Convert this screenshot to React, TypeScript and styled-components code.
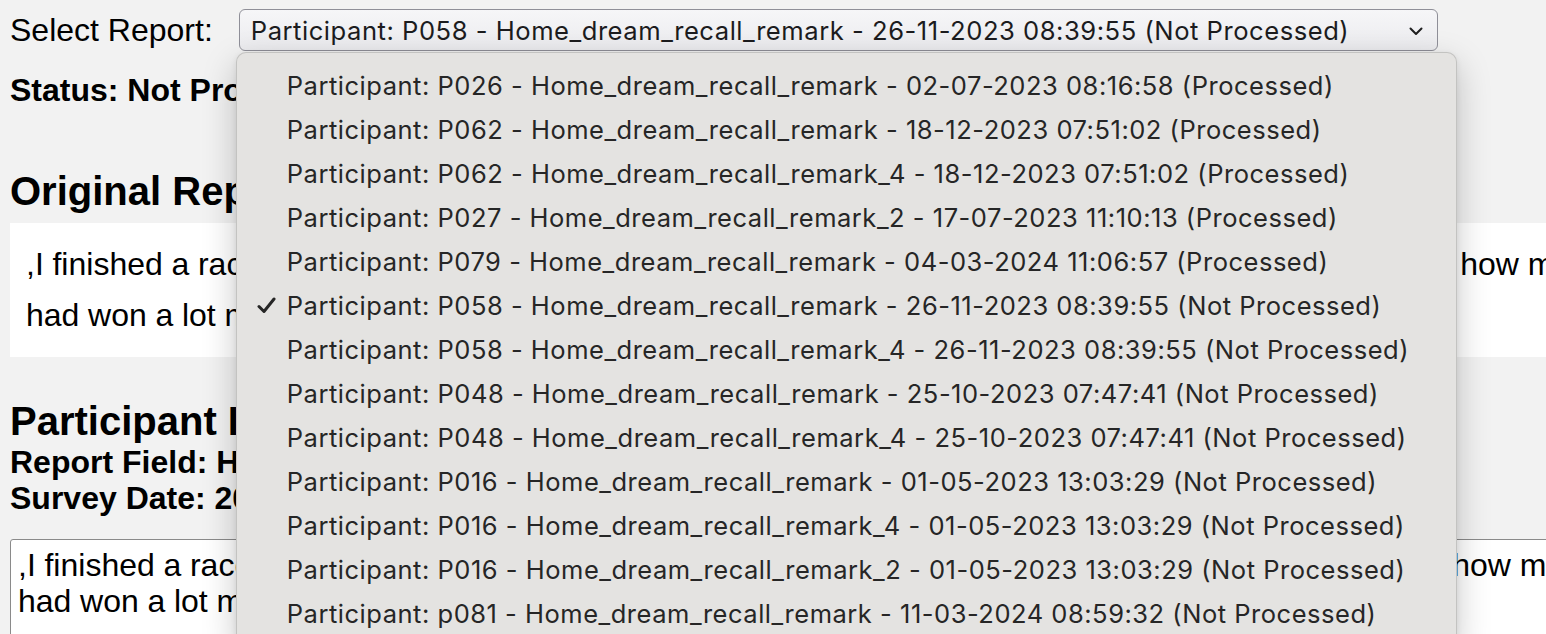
import React from "react";
import styled, { createGlobalStyle } from "styled-components";

type Report = {
  participant: string;
  field: string;
  date: string;
  processed: boolean;
};

const reports: Report[] = [
  { participant: "P026", field: "Home_dream_recall_remark", date: "02-07-2023 08:16:58", processed: true },
  { participant: "P062", field: "Home_dream_recall_remark", date: "18-12-2023 07:51:02", processed: true },
  { participant: "P062", field: "Home_dream_recall_remark_4", date: "18-12-2023 07:51:02", processed: true },
  { participant: "P027", field: "Home_dream_recall_remark_2", date: "17-07-2023 11:10:13", processed: true },
  { participant: "P079", field: "Home_dream_recall_remark", date: "04-03-2024 11:06:57", processed: true },
  { participant: "P058", field: "Home_dream_recall_remark", date: "26-11-2023 08:39:55", processed: false },
  { participant: "P058", field: "Home_dream_recall_remark_4", date: "26-11-2023 08:39:55", processed: false },
  { participant: "P048", field: "Home_dream_recall_remark", date: "25-10-2023 07:47:41", processed: false },
  { participant: "P048", field: "Home_dream_recall_remark_4", date: "25-10-2023 07:47:41", processed: false },
  { participant: "P016", field: "Home_dream_recall_remark", date: "01-05-2023 13:03:29", processed: false },
  { participant: "P016", field: "Home_dream_recall_remark_4", date: "01-05-2023 13:03:29", processed: false },
  { participant: "P016", field: "Home_dream_recall_remark_2", date: "01-05-2023 13:03:29", processed: false },
  { participant: "p081", field: "Home_dream_recall_remark", date: "11-03-2024 08:59:32", processed: false },
];

const selectedIndex = 5;

const reportText =
  ",I finished a race and I wanted to know the results, so I went to check the big board on the wall to see how many points I had won a lot more than the others, and I was very happy about it.";

const label = (r: Report) =>
  `Participant: ${r.participant} - ${r.field} - ${r.date} (${r.processed ? "Processed" : "Not Processed"})`;

const GlobalStyle = createGlobalStyle`
  html, body {
    margin: 0;
    padding: 0;
    background: #f2f2f2;
    overflow: hidden;
  }
  body {
    font-family: "Liberation Sans", Arial, sans-serif;
    font-size: 32px;
    color: #000;
  }
`;

const App: React.FC = () => {
  const current = reports[selectedIndex];
  return (
    <>
      <GlobalStyle />
      <Page>
        <PickerRow>
          <PickerLabel>Select Report:</PickerLabel>
          <SelectWrap>
            <SelectButton>
              <span>{label(current)}</span>
              <svg width="14" height="9" viewBox="0 0 14 9">
                <path d="M1.5 1.5 L7 7 L12.5 1.5" fill="none" stroke="#1f1f1f" strokeWidth="2" strokeLinecap="round" strokeLinejoin="round" />
              </svg>
            </SelectButton>
            <Menu>
              {reports.map((r, i) => (
                <MenuItem key={i}>
                  <CheckSlot>
                    {i === selectedIndex && (
                      <svg width="19" height="17" viewBox="0 0 19 17">
                        <path d="M2 9.5 L7 14.5 L17 2" fill="none" stroke="#262626" strokeWidth="3" strokeLinecap="round" strokeLinejoin="round" />
                      </svg>
                    )}
                  </CheckSlot>
                  {label(r)}
                </MenuItem>
              ))}
            </Menu>
          </SelectWrap>
        </PickerRow>

        <Status>Status: {current.processed ? "Processed" : "Not Processed"}</Status>

        <SectionTitle $top={59}>Original Report</SectionTitle>
        <ReportBox>{reportText}</ReportBox>

        <SectionTitle $top={41}>Participant Input</SectionTitle>
        <MetaLine>Report Field: {current.field}</MetaLine>
        <MetaLine>Survey Date: 2023-11-26 08:39:55</MetaLine>
        <Editor defaultValue={reportText} rows={3} />
      </Page>
    </>
  );
};

const Page = styled.div`
  width: 1776px;
  padding: 0 10px;
  box-sizing: border-box;
`;

const PickerRow = styled.div`
  display: flex;
  align-items: center;
  gap: 26px;
  padding-top: 9px;
  height: 51px;
  box-sizing: border-box;
`;

const PickerLabel = styled.label`
  font-size: 32px;
  line-height: 37px;
`;

const SelectWrap = styled.div`
  position: relative;
`;

const SelectButton = styled.div`
  display: flex;
  align-items: center;
  justify-content: space-between;
  width: 1199px;
  height: 42px;
  box-sizing: border-box;
  padding: 0 14px 0 11px;
  border: 1.5px solid #8f8f98;
  border-radius: 6px;
  background: linear-gradient(#f6f6f8, #ebebee);
  font-family: Inter, "Liberation Sans", sans-serif;
  font-size: 25.6px;
  letter-spacing: 0.52px;
  color: #1c1c1e;
  white-space: nowrap;
  svg {
    margin-top: 2px;
    flex-shrink: 0;
  }
`;

const Menu = styled.div`
  position: absolute;
  top: 43px;
  left: -3px;
  width: 1221px;
  box-sizing: border-box;
  padding: 10px 0;
  background: #e4e3e1;
  border: 1px solid rgba(0, 0, 0, 0.14);
  border-radius: 10px;
  box-shadow: 0 12px 34px rgba(0, 0, 0, 0.22), 0 2px 6px rgba(0, 0, 0, 0.08);
  z-index: 10;
`;

const MenuItem = styled.div`
  display: flex;
  align-items: center;
  height: 44px;
  font-family: Inter, "Liberation Sans", sans-serif;
  font-size: 25.5px;
  letter-spacing: 0.52px;
  color: #262626;
  white-space: nowrap;
`;

const CheckSlot = styled.span`
  display: flex;
  align-items: center;
  justify-content: flex-end;
  width: 39px;
  padding-right: 11px;
  flex-shrink: 0;
`;

const Status = styled.div`
  margin-top: 21px;
  font-weight: bold;
  line-height: 37px;
`;

const SectionTitle = styled.h2<{ $top: number }>`
  margin: ${(p) => p.$top}px 0 0;
  font-size: 40px;
  line-height: 46px;
  font-weight: bold;
`;

const ReportBox = styled.div`
  margin-top: 9px;
  padding: 16px;
  background: #fff;
  font-size: 32px;
  line-height: 51px;
  word-spacing: -0.2px;
`;

const MetaLine = styled.div`
  font-weight: bold;
  line-height: 36px;
  &:first-of-type {
    margin-top: 1px;
  }
`;

const Editor = styled.textarea`
  display: block;
  width: 100%;
  box-sizing: border-box;
  margin-top: 23px;
  padding: 7px 7px;
  border: 1px solid #8a8a8a;
  border-radius: 3px;
  background: #fff;
  font-family: "Liberation Sans", Arial, sans-serif;
  font-size: 32px;
  line-height: 36px;
  word-spacing: -0.2px;
  color: #000;
  resize: none;
  outline: none;
`;

export default App;
